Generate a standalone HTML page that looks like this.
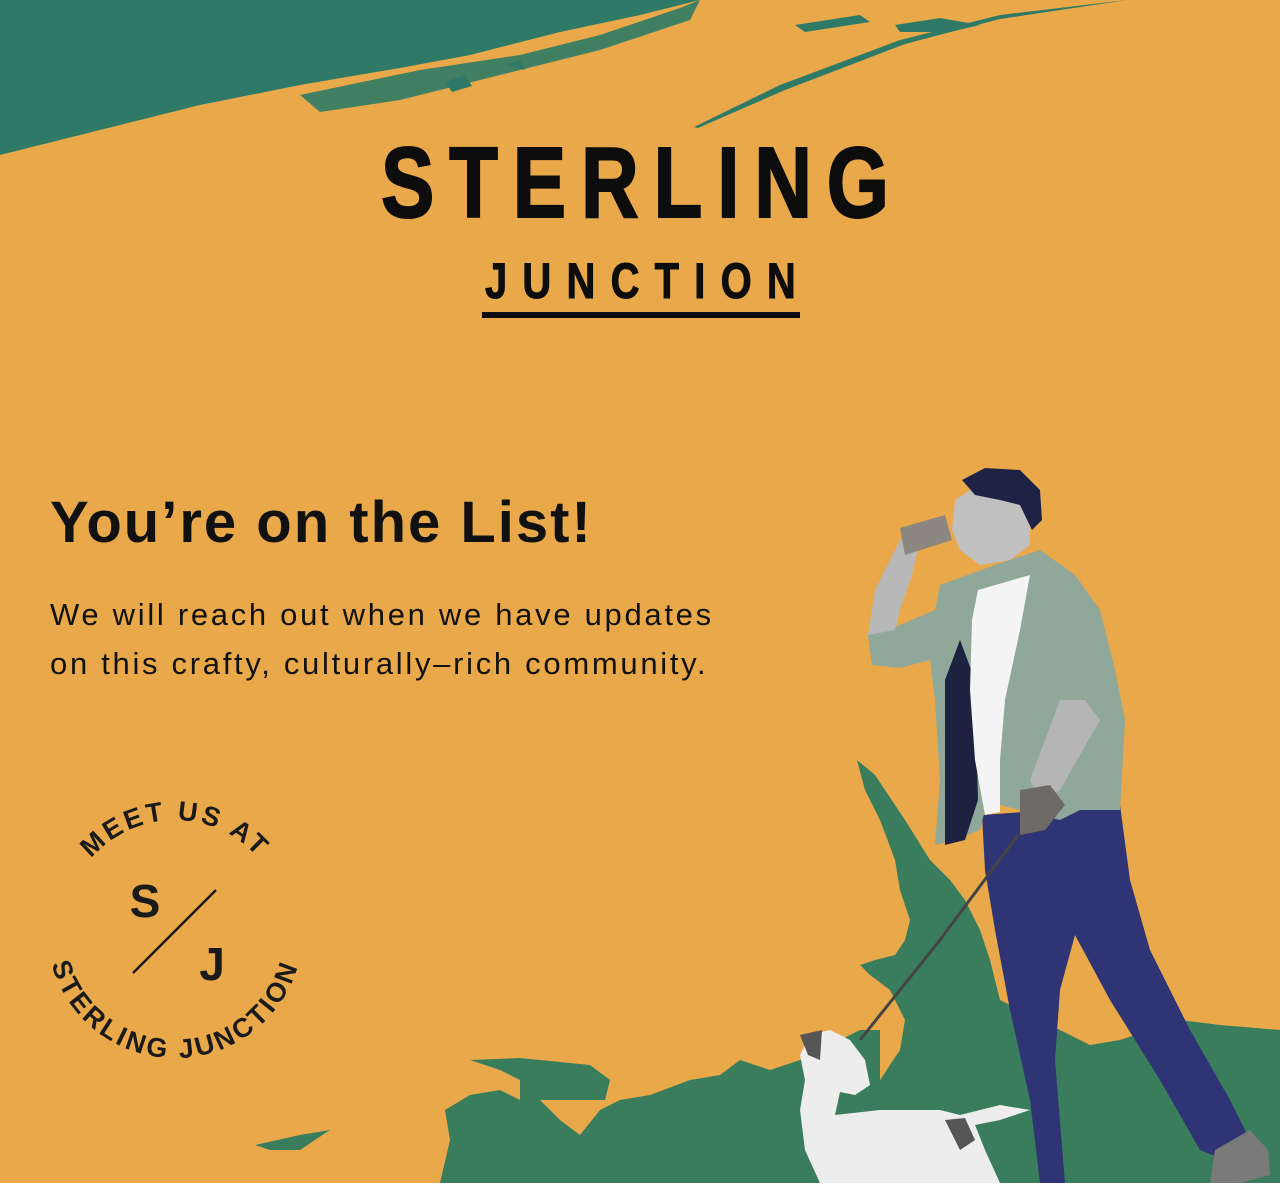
<!DOCTYPE html>
<html><head><meta charset="utf-8">
<style>
html,body{margin:0;padding:0;background:#fff;}
#wrap{position:relative;width:1280px;height:1200px;overflow:hidden;background:#fff;}
#bg{position:absolute;left:0;top:0;width:1280px;height:1183px;background:#E9A94A;overflow:hidden;}
svg.art{position:absolute;left:0;top:0;}
.logo1{position:absolute;left:187px;top:128px;width:800px;text-align:center;font-family:"Liberation Sans",sans-serif;font-weight:bold;font-size:100px;letter-spacing:18.5px;text-indent:18px;color:#0d0d0d;line-height:110px;transform:scaleX(0.8);transform-origin:641px 0;-webkit-text-stroke:2px #0d0d0d;}
.logo2{position:absolute;left:340px;top:253px;width:600px;text-align:center;font-family:"Liberation Sans",sans-serif;font-weight:bold;font-size:50px;letter-spacing:19px;text-indent:19.5px;color:#0d0d0d;line-height:56px;transform:scaleX(0.8);transform-origin:301px 0;-webkit-text-stroke:1px #0d0d0d;}
.uline{position:absolute;left:482px;top:312px;width:318px;height:6px;background:#0d0d0d;}
h1{position:absolute;left:50px;top:494px;margin:0;font-family:"Liberation Sans",sans-serif;font-weight:bold;font-size:58px;line-height:58px;color:#111;letter-spacing:2px;}
p{position:absolute;left:50px;top:590px;margin:0;font-family:"Liberation Sans",sans-serif;font-size:31px;line-height:49px;color:#111;letter-spacing:2.7px;white-space:nowrap;}
</style></head><body>
<div id="wrap"><div id="bg">
<svg class="art" width="1280" height="1183" viewBox="0 0 1280 1183">
 <g fill="#2F7A66">
  <path d="M0 0 L700 0 L640 15 L560 32 L470 55 L400 68 L300 85 L200 105 L120 125 L60 140 L0 155 Z"/>
  <path d="M300 95 L420 70 L520 55 L600 35 L680 8 L700 0 L690 20 L600 50 L500 75 L400 100 L320 112 Z" opacity="0.9"/>
  <path d="M795 25 L860 15 L870 22 L805 32Z"/>
  <path d="M895 25 L940 18 L980 25 L950 32 L900 32Z"/>
  <path d="M694 127 L780 85 L900 40 L1000 15 L1127 0 L1000 19 L905 44 L785 90 L698 128Z"/>
  <path d="M445 82 L465 75 L472 86 L452 92Z"/>
  <path d="M505 65 L520 60 L525 70Z"/>
 </g>
 <g fill="#3A7D5C">
  <path d="M857 760 L875 775 L905 820 L930 860 L950 880 L965 900 L980 930 L990 960 L1000 1000 L1000 1183 L860 1183 L860 1120 L880 1080 L900 1050 L905 1020 L890 990 L870 975 L860 965 L875 960 L895 955 L905 940 L910 920 L900 890 L895 860 L880 820 L865 790Z"/>
  <path d="M1000 1183 L1000 1000 L1060 1030 L1090 1045 L1120 1040 L1150 1030 L1180 1020 L1220 1025 L1280 1030 L1280 1183Z"/>
  <path d="M440 1183 L450 1140 L445 1110 L470 1095 L500 1090 L520 1100 L520 1080 L500 1070 L470 1060 L520 1058 L590 1065 L610 1080 L605 1100 L540 1100 L560 1120 L580 1135 L600 1110 L620 1100 L650 1095 L690 1080 L720 1075 L740 1060 L770 1070 L800 1060 L830 1045 L860 1030 L880 1030 L880 1183Z"/>
  <path d="M255 1145 L300 1135 L330 1130 L300 1150 L270 1150Z"/>
 </g>
 <path fill="#2F3475" d="M982 815 L1120 805 L1130 880 L1150 950 L1190 1030 L1230 1100 L1250 1140 L1225 1160 L1200 1150 L1160 1080 L1110 1000 L1075 935 L1060 990 L1055 1060 L1065 1183 L1040 1183 L1030 1100 L1010 1010 L995 930 L985 870Z"/>
 <path fill="#7A7A7A" d="M1215 1150 L1250 1130 L1268 1150 L1270 1175 L1240 1183 L1210 1183Z"/>
 <path fill="#8FA89A" d="M940 585 L995 565 L1040 550 L1075 575 L1100 610 L1115 670 L1125 720 L1120 810 L1080 810 L1060 820 L1000 805 L985 810 L980 830 L955 840 L935 845 L940 780 L935 700 L930 660 L900 668 L872 665 L868 635 L900 625 L935 610Z"/>
 <path fill="#1D2240" d="M945 680 L960 640 L975 680 L978 800 L965 840 L945 845 Z"/>
 <path fill="#F4F4F4" d="M978 590 L1030 575 L1020 630 L1005 700 L1000 760 L1000 812 L985 815 L975 760 L970 690 L972 620Z"/>
 <path fill="#B8B8B8" d="M868 635 L875 590 L890 560 L900 540 L920 540 L912 575 L900 610 L895 630Z"/>
 <path fill="#B5B5B5" d="M1060 700 L1085 700 L1100 720 L1060 790 L1040 800 L1030 780Z"/>
 <path fill="#6E6A65" d="M1020 790 L1050 785 L1065 805 L1045 830 L1020 835 Z"/>
 <path fill="#8C8680" d="M900 528 L945 515 L952 540 L905 555Z"/>
 <path fill="#C0C0C0" d="M955 500 L970 490 L1010 490 L1030 510 L1030 545 L1010 560 L980 565 L960 550 L952 530Z"/>
 <path fill="#1E2345" d="M962 480 L985 468 L1020 470 L1040 490 L1042 520 L1032 530 L1020 505 L1000 500 L975 495Z"/>
 <path d="M1018 835 L940 940 L860 1040" stroke="#444" stroke-width="3" fill="none"/>
 <path fill="#EDEDED" d="M800 1055 L810 1035 L830 1030 L850 1040 L865 1060 L870 1085 L855 1095 L840 1092 L835 1115 L880 1110 L940 1110 L960 1115 L1000 1105 L1030 1110 L1000 1120 L975 1125 L985 1150 L1000 1183 L820 1183 L805 1150 L800 1110 L805 1080Z"/>
 <path fill="#555" d="M800 1035 L822 1030 L820 1060 L808 1055Z"/>
 <path fill="#555" d="M945 1120 L965 1118 L975 1140 L960 1150Z"/>
</svg>
<div class="logo1">STERLING</div>
<div class="logo2">JUNCTION</div>
<div class="uline"></div>
<h1>You’re on the List!</h1>
<p>We will reach out when we have updates<br>on this crafty, culturally–rich community.</p>
<svg class="art" width="400" height="1183" viewBox="0 0 400 1183" style="font-family:'Liberation Sans',sans-serif;font-weight:bold;">
 <defs>
  <path id="top" d="M65 930 A110 110 0 0 1 285 930"/>
  <path id="bot" d="M47.5 918.8 A128 128 0 1 0 302.5 918.8"/>
 </defs>
 <text font-size="27" fill="#1a1a1a" letter-spacing="3" text-anchor="middle"><textPath href="#top" startOffset="50%">MEET US AT</textPath></text>
 <text font-size="27" fill="#1a1a1a" letter-spacing="3" text-anchor="middle"><textPath href="#bot" startOffset="50%">STERLING JUNCTION</textPath></text>
 <text x="145" y="917" font-size="46" fill="#1a1a1a" text-anchor="middle">S</text>
 <text x="212" y="980" font-size="46" fill="#1a1a1a" text-anchor="middle">J</text>
 <line x1="133" y1="973" x2="216" y2="890" stroke="#1a1a1a" stroke-width="2.5"/>
</svg>
</div></div>
</body></html>
